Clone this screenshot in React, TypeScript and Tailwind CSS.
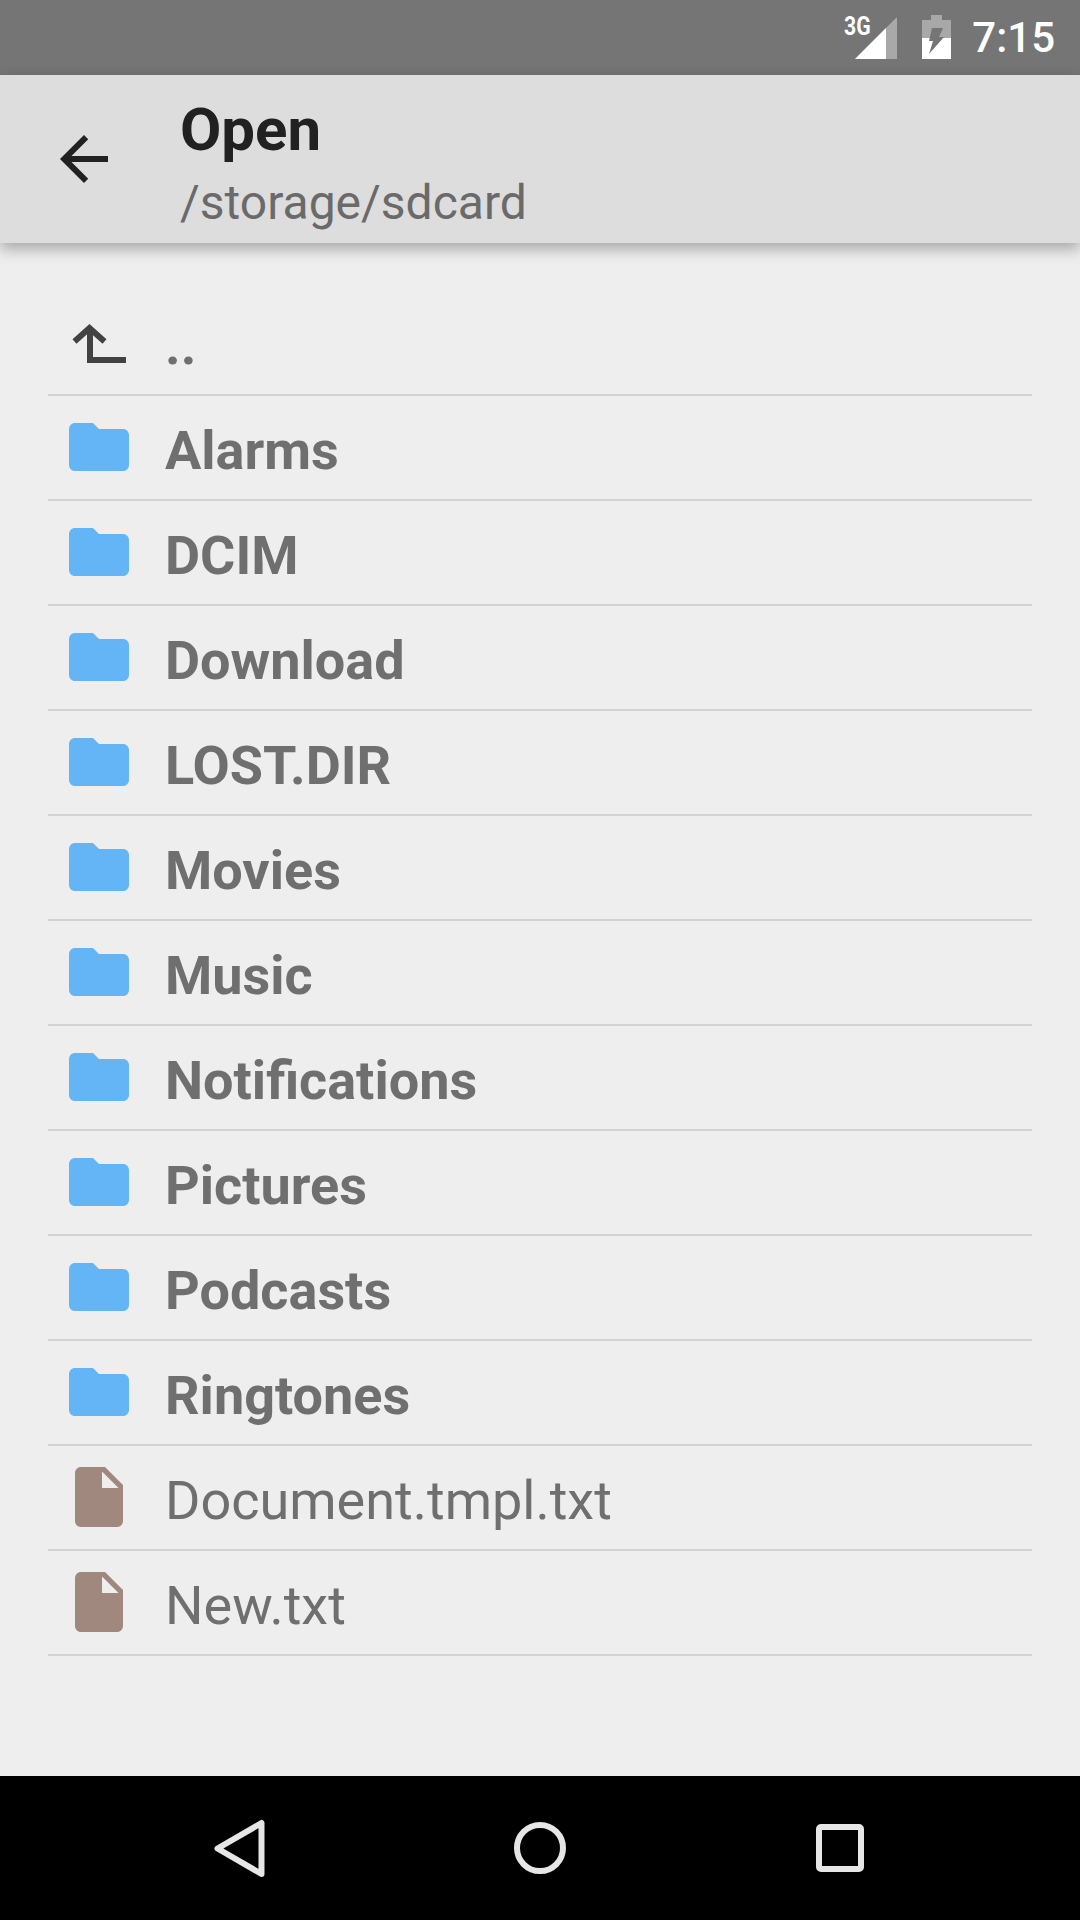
import React from "react";

const folders = ["Alarms", "DCIM", "Download", "LOST.DIR", "Movies", "Music", "Notifications", "Pictures", "Podcasts", "Ringtones"];
const files = ["Document.tmpl.txt", "New.txt"];

function FolderIcon() {
  return (
    <svg viewBox="0 0 24 24" className="h-[72px] w-[72px] shrink-0 fill-[#64b5f6]">
      <path d="M10 4H4c-1.1 0-1.99.9-1.99 2L2 18c0 1.1.9 2 2 2h16c1.1 0 2-.9 2-2V8c0-1.1-.9-2-2-2h-8l-2-2z" />
    </svg>
  );
}

function FileIcon() {
  return (
    <svg viewBox="0 0 24 24" className="h-[72px] w-[72px] shrink-0 fill-[#a1887f]">
      <path d="M6 2c-1.1 0-1.99.9-1.99 2L4 20c0 1.1.89 2 1.99 2H18c1.1 0 2-.9 2-2V8l-6-6H6zm7 7V3.5L18.5 9H13z" />
    </svg>
  );
}

function ParentIcon() {
  return (
    <svg viewBox="0 0 72 72" className="h-[72px] w-[72px] shrink-0 fill-none stroke-[#424242] stroke-[6]">
      <path d="M27 24V54H63" />
      <path d="M11.500 35.500L26.500 22L41.500 35.500" />
    </svg>
  );
}

function Row({ icon, name, bold }: { icon: React.ReactNode; name: string; bold?: boolean }) {
  return (
    <div className="flex h-[105px] items-center border-b-2 border-[#d2d2d2] pl-[15px]">
      {icon}
      <span className={`ml-[30px] pt-[7px] text-[54px] leading-none text-[#6f6f6f] ${bold ? "font-bold" : "font-normal"}`}>{name}</span>
    </div>
  );
}

export default function App() {
  return (
    <div className="flex h-[1920px] w-[1080px] flex-col overflow-hidden bg-[#eeeeee] font-['Roboto',sans-serif]">
      {/* status bar */}
      <div className="flex h-[75px] shrink-0 items-center justify-end bg-[#757575] pr-[25px]">
        <div className="relative mr-[25px] h-[75px] w-[53px]">
          <svg viewBox="0 0 53 75" className="absolute inset-0 h-[75px] w-[53px]">
            <path d="M11 59 L53 17 V59 Z" fill="#a8a8a8" />
            <path d="M11 59 L42 28 V59 Z" fill="#ffffff" />
          </svg>
          <span className="absolute left-0 top-[14px] origin-left scale-x-[0.85] text-[25px] font-bold leading-[26px] text-white">3G</span>
        </div>
        <svg viewBox="0 0 29 75" className="mr-[21px] h-[75px] w-[29px] shrink-0">
          <path d="M9 15H20V20H29V59H0V20H9Z" fill="#a8a8a8" />
          <path d="M0 38H29V59H0Z" fill="#ffffff" />
          <path d="M10 28H21L17 37H22L7 54L11 41H7Z" fill="#757575" />
        </svg>
        <span className="text-[42px] font-medium leading-none text-white">7:15</span>
      </div>

      {/* toolbar */}
      <div className="relative z-10 flex h-[168px] shrink-0 items-center bg-[#dddddd] pl-[48px] shadow-[0_6px_14px_rgba(0,0,0,0.3)]">
        <svg viewBox="0 0 24 24" className="h-[72px] w-[72px] shrink-0 fill-[#212121]">
          <path d="M20 11H7.83l5.59-5.59L12 4l-8 8 8 8 1.41-1.41L7.83 13H20v-2z" />
        </svg>
        <div className="ml-[60px] flex flex-col">
          <span className="text-[60px] font-bold leading-[87px] text-[#212121]">Open</span>
          <span className="text-[48px] leading-[60px] text-[#6a6a6a]">/storage/sdcard</span>
        </div>
      </div>

      {/* directory listing */}
      <div className="flex-1 px-[48px] pt-[47.500px]">
        <Row icon={<ParentIcon />} name=".." bold />
        {folders.map((name) => (
          <Row key={name} icon={<FolderIcon />} name={name} bold />
        ))}
        {files.map((name) => (
          <Row key={name} icon={<FileIcon />} name={name} />
        ))}
      </div>

      {/* navigation bar */}
      <div className="flex h-[144px] shrink-0 items-center justify-center gap-[228px] bg-black">
        <svg viewBox="0 0 72 72" className="h-[72px] w-[72px] fill-none stroke-[#e6e6e6] stroke-[6]">
          <path strokeLinejoin="round" d="M57.500 11V62L13.500 36.500Z" />
        </svg>
        <svg viewBox="0 0 72 72" className="h-[72px] w-[72px] fill-none stroke-[#e6e6e6] stroke-[6]">
          <circle cx="36" cy="36" r="23" />
        </svg>
        <svg viewBox="0 0 72 72" className="h-[72px] w-[72px] fill-none stroke-[#e6e6e6] stroke-[6]">
          <rect x="15" y="15" width="42" height="42" rx="2" />
        </svg>
      </div>
    </div>
  );
}
